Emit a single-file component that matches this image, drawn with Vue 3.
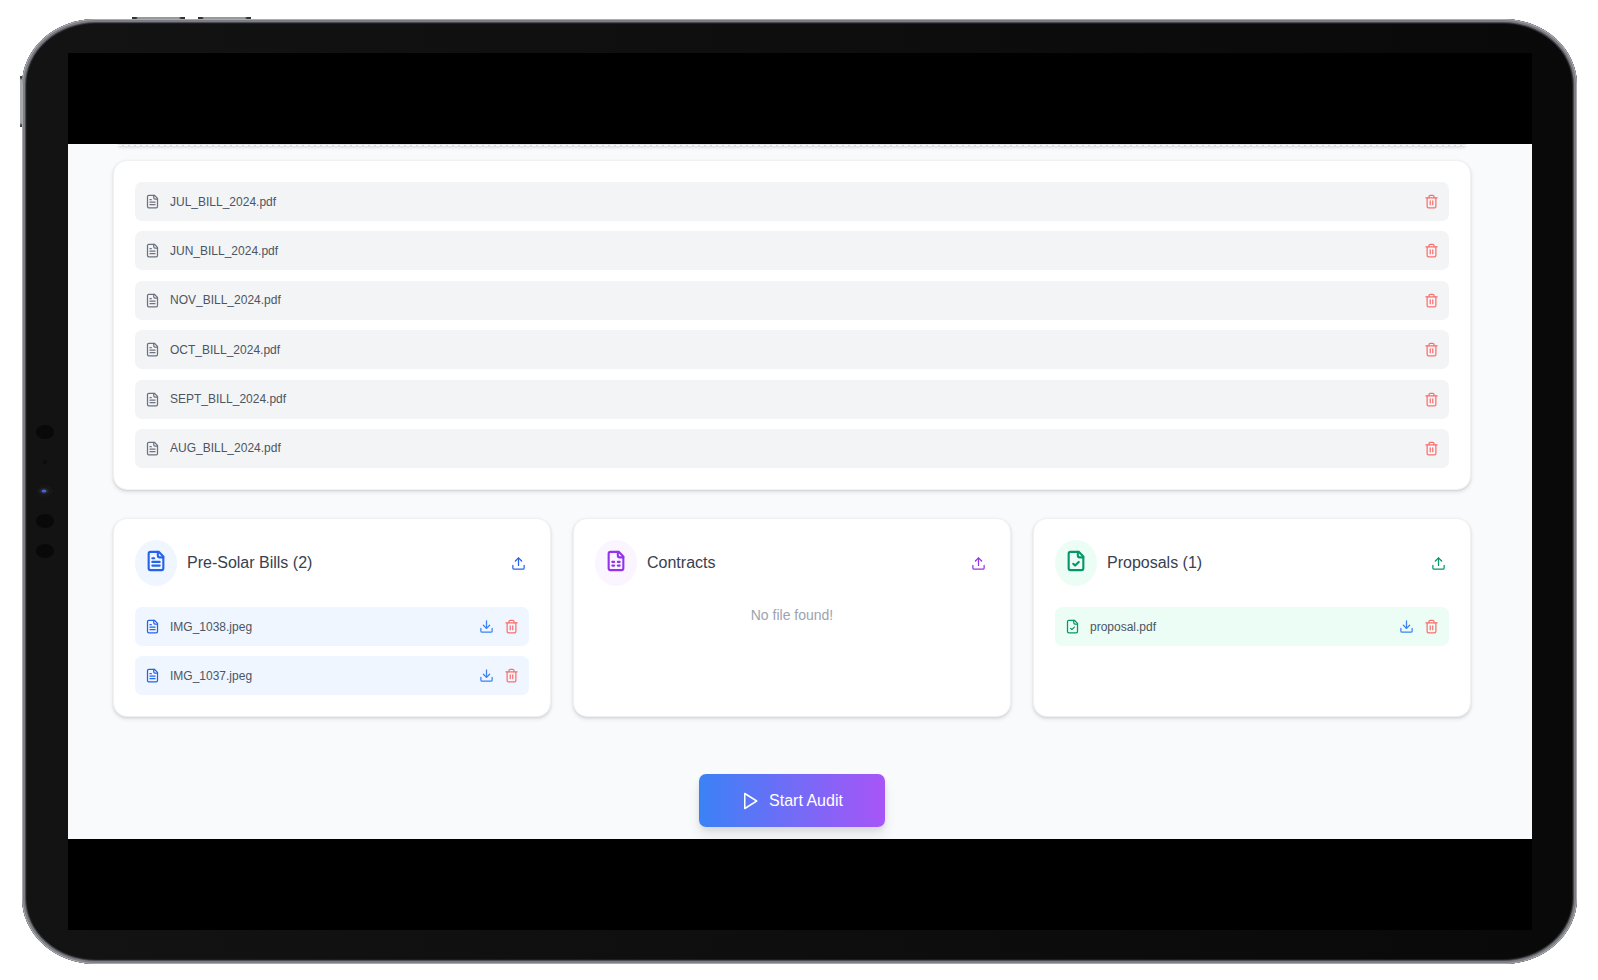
<script setup>
import { computed, ref } from 'vue'

const icons = {
  fileText: [
    'M15 2H6a2 2 0 0 0-2 2v16a2 2 0 0 0 2 2h12a2 2 0 0 0 2-2V7Z',
    'M14 2v4a2 2 0 0 0 2 2h4',
    'M10 9H8',
    'M16 13H8',
    'M16 17H8',
  ],
  fileSheet: [
    'M15 2H6a2 2 0 0 0-2 2v16a2 2 0 0 0 2 2h12a2 2 0 0 0 2-2V7Z',
    'M14 2v4a2 2 0 0 0 2 2h4',
    'M8 13h2',
    'M14 13h2',
    'M8 17h2',
    'M14 17h2',
  ],
  fileCheck: [
    'M15 2H6a2 2 0 0 0-2 2v16a2 2 0 0 0 2 2h12a2 2 0 0 0 2-2V7Z',
    'M14 2v4a2 2 0 0 0 2 2h4',
    'm9 15 2 2 4-4',
  ],
  upload: ['M21 15v4a2 2 0 0 1-2 2H5a2 2 0 0 1-2-2v-4', 'm17 8-5-5-5 5', 'M12 3v12'],
  download: ['M21 15v4a2 2 0 0 1-2 2H5a2 2 0 0 1-2-2v-4', 'm7 10 5 5 5-5', 'M12 15V3'],
  trash: [
    'M3 6h18',
    'M19 6v14a2 2 0 0 1-2 2H7a2 2 0 0 1-2-2V6',
    'M8 6V4a2 2 0 0 1 2-2h4a2 2 0 0 1 2 2v2',
    'M10 11v6',
    'M14 11v6',
  ],
}

const bills = ref([
  'JUL_BILL_2024.pdf',
  'JUN_BILL_2024.pdf',
  'NOV_BILL_2024.pdf',
  'OCT_BILL_2024.pdf',
  'SEPT_BILL_2024.pdf',
  'AUG_BILL_2024.pdf',
])

const groups = ref([
  { name: 'Pre-Solar Bills', theme: 'blue', icon: 'fileText', files: ['IMG_1038.jpeg', 'IMG_1037.jpeg'] },
  { name: 'Contracts', theme: 'purple', icon: 'fileSheet', files: [] },
  { name: 'Proposals', theme: 'green', icon: 'fileCheck', files: ['proposal.pdf'] },
])

const cards = computed(() =>
  groups.value.map((group) => ({
    ...group,
    title: group.files.length ? `${group.name} (${group.files.length})` : group.name,
  })),
)

function removeBill(file) {
  bills.value = bills.value.filter((item) => item !== file)
}

function removeFile(index, file) {
  const group = groups.value[index]
  group.files = group.files.filter((item) => item !== file)
}
</script>

<template>
  <div class="stage">
    <div class="tablet">
      <span class="side-key volume-up"></span>
      <span class="side-key volume-down"></span>
      <span class="side-key power"></span>
      <svg class="sensors" viewBox="0 0 20 140" aria-hidden="true">
        <ellipse cx="10" cy="11" rx="9" ry="7" fill="#090909" />
        <circle cx="10" cy="41" r="2" fill="#0c0c0c" />
        <ellipse cx="10" cy="70" rx="8" ry="6" fill="#171719" />
        <ellipse cx="9" cy="70" rx="5" ry="3" fill="#24252b" />
        <ellipse cx="9" cy="70" rx="2.5" ry="1.5" fill="#4864d8" />
        <ellipse cx="10" cy="100" rx="9" ry="7" fill="#090909" />
        <ellipse cx="10" cy="130" rx="9" ry="7" fill="#090909" />
      </svg>

      <div class="screen">
        <main class="workspace">
          <div class="dropzone"></div>

          <section class="card bills">
            <ul class="file-list">
              <li v-for="file in bills" :key="file" class="file gray">
                <svg class="icon tint" viewBox="0 0 24 24">
                  <path v-for="d in icons.fileText" :key="d" :d="d" />
                </svg>
                <span class="file-name">{{ file }}</span>
                <button type="button" class="action delete" :aria-label="`Delete ${file}`" @click="removeBill(file)">
                  <svg class="icon" viewBox="0 0 24 24">
                    <path v-for="d in icons.trash" :key="d" :d="d" />
                  </svg>
                </button>
              </li>
            </ul>
          </section>

          <div class="groups">
            <section v-for="(card, index) in cards" :key="card.name" class="card" :class="card.theme">
              <header class="card-header">
                <span class="badge">
                  <svg class="icon large tint" viewBox="0 0 24 24">
                    <path v-for="d in icons[card.icon]" :key="d" :d="d" />
                  </svg>
                </span>
                <h3>{{ card.title }}</h3>
                <button type="button" class="action upload tint" :aria-label="`Upload ${card.name}`">
                  <svg class="icon" viewBox="0 0 24 24">
                    <path v-for="d in icons.upload" :key="d" :d="d" />
                  </svg>
                </button>
              </header>

              <ul v-if="card.files.length" class="file-list">
                <li v-for="file in card.files" :key="file" class="file">
                  <svg class="icon tint" viewBox="0 0 24 24">
                    <path v-for="d in icons[card.icon]" :key="d" :d="d" />
                  </svg>
                  <span class="file-name">{{ file }}</span>
                  <button type="button" class="action download" :aria-label="`Download ${file}`">
                    <svg class="icon" viewBox="0 0 24 24">
                      <path v-for="d in icons.download" :key="d" :d="d" />
                    </svg>
                  </button>
                  <button
                    type="button"
                    class="action delete"
                    :aria-label="`Delete ${file}`"
                    @click="removeFile(index, file)"
                  >
                    <svg class="icon" viewBox="0 0 24 24">
                      <path v-for="d in icons.trash" :key="d" :d="d" />
                    </svg>
                  </button>
                </li>
              </ul>
              <p v-else class="empty">No file found!</p>
            </section>
          </div>

          <button type="button" class="start">
            <svg class="icon play" viewBox="0 0 24 24">
              <path d="M5 2l16 10-16 10Z" />
            </svg>
            Start Audit
          </button>
        </main>
      </div>
    </div>
  </div>
</template>

<style>
body {
  margin: 0;
  background: #fff;
}
</style>

<style scoped>
.stage {
  display: flex;
  box-sizing: border-box;
  min-height: 100vh;
  padding: 19px 21px 16px 22px;
  font-family: Arial, 'Liberation Sans', sans-serif;
}

.tablet {
  position: relative;
  display: flex;
  flex: 1;
  min-width: 0;
  padding: 34px 45px 34px 46px;
  border-radius: 74px / 66px;
  background: linear-gradient(90deg, #131313, #090909);
  box-shadow:
    inset 0 0 0 1px #a9abaf,
    inset 0 0 0 3px #7d7e83,
    inset 0 0 0 4px #4a4b50,
    inset 0 0 0 5px #1d1d1f;
}

.side-key {
  position: absolute;
  background: linear-gradient(90deg, #333 4px, #96989c 6px calc(100% - 6px), #333 calc(100% - 4px));
}

.volume-up,
.volume-down {
  top: -2px;
  left: 110px;
  width: 53px;
  height: 2px;
}

.volume-down {
  left: 176px;
}

.power {
  top: 57px;
  left: -2px;
  width: 2px;
  height: 51px;
  background: linear-gradient(#444 2px, #a6a8ac 4px calc(100% - 4px), #444 calc(100% - 2px));
}

.sensors {
  position: absolute;
  top: calc(50% - 71px);
  left: 13px;
  width: 20px;
  height: 140px;
}

.screen {
  display: flex;
  flex: 1;
  flex-direction: column;
  justify-content: center;
  min-width: 0;
  background: #000;
}

.workspace {
  display: flex;
  flex-direction: column;
  overflow: hidden;
  padding: 0 61px 12px 45px;
  background: #f9fafc;
}

/* bottom edge of the upload area that is scrolled out of view */
.dropzone {
  height: 3px;
  margin: 0 5px 13px;
  border-radius: 0 0 8px 8px;
  background:
    repeating-linear-gradient(90deg, #fff 0 4px, #d9dbde 4px 6px) 0 1px / 100% 1px no-repeat,
    #dfe1e4;
  box-shadow: 0 1px 3px rgba(0, 0, 0, 0.1);
}

.card {
  padding: 21px;
  border: 1px solid #f0f1f3;
  border-radius: 14px;
  background: #fff;
  box-shadow:
    0 2px 4px rgba(0, 0, 0, 0.1),
    0 1px 2px rgba(0, 0, 0, 0.08);
}

.bills {
  display: grid;
  box-sizing: border-box;
  min-height: 330px;
}

.bills .file-list {
  align-content: space-between;
}

.groups {
  display: grid;
  grid-template-columns: repeat(3, minmax(0, 1fr));
  gap: 22px;
  margin: 28px 0 57px;
}

.card-header {
  display: flex;
  align-items: center;
  gap: 10px;
  margin-bottom: 21px;
}

.badge {
  box-sizing: border-box;
  width: 42px;
  height: 46px;
  padding: 10px;
  border-radius: 50%;
  background: var(--soft);
}

h3 {
  flex: 1;
  margin: 0;
  font-size: 16px;
  font-weight: 400;
  line-height: 24px;
  color: #374151;
}

.file-list {
  display: grid;
  gap: 10px;
  margin: 0;
  padding: 0;
  list-style: none;
}

.file {
  display: flex;
  align-items: center;
  gap: 10px;
  box-sizing: border-box;
  min-height: 39px;
  padding: 10px;
  border-radius: 7px;
  background: var(--soft);
}

.file-name {
  flex: 1;
  min-width: 0;
  font-size: 12px;
  line-height: 18px;
  color: #4b5563;
}

.gray {
  --soft: #f3f4f6;
  --tint: #6b7280;
}

.blue {
  --soft: #eff6ff;
  --tint: #2563eb;
}

.purple {
  --soft: #faf5ff;
  --tint: #9333ea;
}

.green {
  --soft: #ecfdf5;
  --tint: #059669;
}

.icon {
  display: block;
  flex: none;
  width: 15px;
  height: 15px;
  fill: none;
  stroke: currentColor;
  stroke-width: 2;
  stroke-linecap: round;
  stroke-linejoin: round;
}

.large {
  width: 22px;
  height: 22px;
  stroke-width: 2.3;
}

.tint {
  color: var(--tint);
}

.action {
  padding: 0;
  border: 0;
  background: none;
  cursor: pointer;
}

.upload {
  padding: 3px;
}

.download {
  color: #3b82f6;
}

.delete {
  color: #f87171;
}

.empty {
  margin: 0;
  font-size: 14px;
  line-height: 16px;
  text-align: center;
  color: #9ca3af;
}

.start {
  display: flex;
  align-items: center;
  align-self: center;
  gap: 10px;
  padding: 14px 42px;
  border: 0;
  border-radius: 7px;
  background: linear-gradient(90deg, #3b82f6, #a855f7);
  box-shadow:
    0 9px 13px rgba(0, 0, 0, 0.08),
    0 3px 5px rgba(0, 0, 0, 0.08);
  font: inherit;
  font-size: 16px;
  line-height: 25px;
  color: #fff;
  cursor: pointer;
}

.play {
  width: 18px;
  height: 18px;
}
</style>
